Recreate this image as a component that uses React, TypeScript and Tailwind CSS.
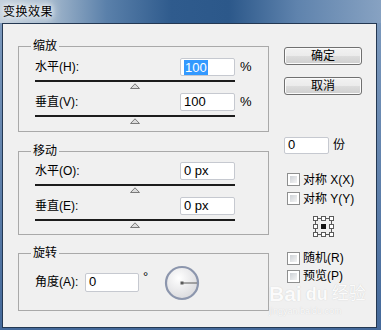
import React from "react";

const FONT = { fontFamily: '"Liberation Sans", "Noto Sans CJK SC", sans-serif' };

const Triangle = () => (
	<svg width="10" height="6" viewBox="0 0 10 6" className="block">
		<polygon points="0.5,5.5 5,0.8 9.5,5.5" fill="#dcdcdc" stroke="#7a7a7a" strokeWidth="1" />
	</svg>
);

const TextBox = ({ value, width, selected }: { value: string; width: string; selected?: boolean }) => (
	<div
		className={`${width} h-[18px] bg-white border border-[#c6c9d0] rounded-[2px] flex items-center pl-[3px] text-[13px] text-black`}
	>
		{selected ? <span className="bg-[#3399ff] text-white px-[1px] leading-[15px]">{value}</span> : value}
	</div>
);

const SliderRow = ({ label, value, unit, selected }: { label: string; value: string; unit?: string; selected?: boolean }) => (
	<div className="flex flex-col">
		<div className="flex items-center h-[18px]">
			<span className="w-[145px] text-[12px]">{label}</span>
			<TextBox value={value} width="w-[55px]" selected={selected} />
			{unit && <span className="ml-[5px] text-[13px]">{unit}</span>}
		</div>
		<div className="mt-[4px] w-[200px] h-[2px] bg-[#1c1c1c]" />
		<div className="w-[200px] flex justify-center mt-[1px]">
			<Triangle />
		</div>
	</div>
);

const Group = ({ title, className, children }: { title: string; className: string; children: React.ReactNode }) => (
	<div className={`relative border border-[#a9a9a9] ${className}`}>
		<span className="absolute left-[12px] top-[-8px] px-[2px] bg-[#f0f0f0] text-[12px] leading-[14px]">{title}</span>
		{children}
	</div>
);

const Button = ({ label, className = "" }: { label: string; className?: string }) => (
	<button
		className={`block w-[78px] h-[18px] border border-[#707070] rounded-[3px] text-[12px] leading-none text-black bg-[linear-gradient(#f2f2f2_0%,#ebebeb_50%,#dddddd_50%,#cfcfcf_100%)] shadow-[inset_0_0_0_1px_#fbfbfb] ${className}`}
	>
		{label}
	</button>
);

const Check = ({ label, h }: { label: string; h: string }) => (
	<div className={`flex items-center ${h}`}>
		<div className="w-[13px] h-[13px] border border-[#8e8f8f] bg-white p-[2px] ml-[3px]">
			<div className="w-full h-full bg-[linear-gradient(135deg,#cdd1d6,#f4f4f4)]" />
		</div>
		<span className="ml-[3px] text-[12px]">{label}</span>
	</div>
);

const GridIcon = () => {
	const pos = [0, 8, 16];
	return (
		<svg width="21" height="21" viewBox="0 0 21 21" className="block">
			<g stroke="#5a5a5a" strokeWidth="1">
				<line x1="5" y1="2.5" x2="8" y2="2.5" />
				<line x1="13" y1="2.5" x2="16" y2="2.5" />
				<line x1="5" y1="18.5" x2="8" y2="18.5" />
				<line x1="13" y1="18.5" x2="16" y2="18.5" />
				<line x1="2.5" y1="5" x2="2.5" y2="8" />
				<line x1="2.5" y1="13" x2="2.5" y2="16" />
				<line x1="18.5" y1="5" x2="18.5" y2="8" />
				<line x1="18.5" y1="13" x2="18.5" y2="16" />
			</g>
			{pos.map((y) =>
				pos.map((x) => (
					<rect
						key={`${x}-${y}`}
						x={x + 0.5}
						y={y + 0.5}
						width="4"
						height="4"
						fill={x === 8 && y === 8 ? "#111" : "#fff"}
						stroke={x === 8 && y === 8 ? "#111" : "#5a5a5a"}
					/>
				))
			)}
		</svg>
	);
};

const Dial = () => (
	<svg width="36" height="36" viewBox="0 0 36 36" className="block">
		<defs>
			<radialGradient id="dialFill" cx="40%" cy="35%" r="70%">
				<stop offset="0%" stopColor="#ffffff" />
				<stop offset="100%" stopColor="#d9d9dc" />
			</radialGradient>
		</defs>
		<circle cx="18" cy="18" r="16" fill="url(#dialFill)" stroke="#8c96ad" strokeWidth="2.2" />
		<line x1="18" y1="18" x2="33" y2="18" stroke="#5a5a5a" strokeWidth="1" />
		<rect x="16.5" y="16.5" width="3" height="3" fill="#5a5a5a" />
	</svg>
);

export default function App() {
	return (
		<div
			className="w-[381px] h-[330px] flex flex-col bg-[linear-gradient(#7f9cbf,#44699a)] text-black overflow-hidden"
			style={FONT}
		>
			<div className="h-[23px] shrink-0 flex items-center pl-[3px] bg-[linear-gradient(90deg,#c3d0dd_0%,#a9bccf_12%,#5a80aa_28%,#2f5b8d_45%,#2c588a_60%,#5f83ad_78%,#87a2c2_100%)]">
				<span className="text-[12px] tracking-[0.5px] [text-shadow:0_0_5px_#fff,0_0_9px_#fff,0_0_12px_#fff]">变换效果</span>
			</div>
			<div className="relative ml-[2px] mr-[4px] mb-[2px] flex-1 border border-[#243852] bg-[#f0f0f0] flex">
				<div className="w-[266px] pl-[15px] pt-[22px] flex flex-col shrink-0">
					<Group title="缩放" className="h-[86px] pl-[16px] pt-[11px]">
						<SliderRow label="水平(H):" value="100" unit="%" selected />
						<div className="mt-[4px]">
							<SliderRow label="垂直(V):" value="100" unit="%" />
						</div>
					</Group>
					<Group title="移动" className="mt-[19px] h-[84px] pl-[16px] pt-[10px]">
						<SliderRow label="水平(O):" value="0 px" />
						<div className="mt-[4px]">
							<SliderRow label="垂直(E):" value="0 px" />
						</div>
					</Group>
					<Group title="旋转" className="mt-[18px] h-[58px] pl-[16px] flex items-center">
						<span className="w-[50px] text-[12px]">角度(A):</span>
						<div className="h-[19px] flex">
							<TextBox value="0" width="w-[54px] !h-[19px]" />
						</div>
						<span className="ml-[4px] text-[13px] self-start mt-[16px] leading-[14px]">°</span>
						<div className="ml-[16px] mt-[1px]">
							<Dial />
						</div>
					</Group>
				</div>
				<div className="pl-[15px] pt-[23px] flex flex-col items-start">
					<Button label="确定" />
					<Button label="取消" className="mt-[12px]" />
					<div className="mt-[41px] flex items-center">
						<TextBox value="0" width="w-[45px] !h-[17px]" />
						<span className="ml-[4px] text-[12px]">份</span>
					</div>
					<div className="mt-[16px] flex flex-col">
						<Check label="对称 X(X)" h="h-[19px]" />
						<Check label="对称 Y(Y)" h="h-[19px]" />
					</div>
					<div className="mt-[8px] ml-[29px]">
						<GridIcon />
					</div>
					<div className="mt-[12px] flex flex-col">
						<Check label="随机(R)" h="h-[18px]" />
						<Check label="预览(P)" h="h-[18px]" />
					</div>
				</div>
				<div className="absolute left-[266px] top-[258px] w-[100px] pointer-events-none flex flex-col items-start whitespace-nowrap text-[#fbfbfb] [text-shadow:0_0_1px_#c8c8c8]">
					<div className="flex items-end gap-[4px]">
						<span className="text-[21px] font-bold leading-[24px]">Bai</span>
						<span className="text-[18px] font-bold leading-[24px]">du</span>
						<span className="text-[17px] leading-[24px]">经验</span>
					</div>
					<span className="text-[9px] leading-[11px]">jingyan.baidu.com</span>
				</div>
			</div>
		</div>
	);
}
